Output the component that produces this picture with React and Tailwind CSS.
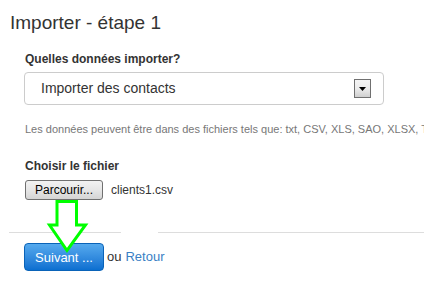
import React from "react";

const font = { fontFamily: '"Liberation Sans", Arial, sans-serif' };

const SelectArrow = () => (
  <div className="w-[17px] h-[19px] border border-[#707070] bg-gradient-to-b from-[#f4f4f4] via-[#ececec] to-[#cfcfcf] flex items-center justify-center">
    <svg width="7" height="4" viewBox="0 0 7 4">
      <polygon points="0,0 7,0 3.5,4" fill="#000" />
    </svg>
  </div>
);

const GreenArrow = () => (
  <svg
    className="absolute left-0 top-0 pointer-events-none"
    width="424"
    height="292"
    viewBox="0 0 424 292"
  >
    <polygon
      points="57,201.5 57,225 49.5,225 67,250.5 85.5,225 76.5,225 76.5,201.5"
      fill="#fff"
      stroke="#00ff00"
      strokeWidth="3"
      strokeLinejoin="miter"
    />
  </svg>
);

export default function App() {
  return (
    <div className="relative w-[424px] h-[292px] overflow-hidden bg-white text-[#333]" style={font}>
      <h1 className="mt-[11px] ml-[10px] text-[19px] leading-[24px] font-normal text-[#333]">
        Importer - étape 1
      </h1>

      <div className="ml-[24px]">
        <label className="block mt-[16px] ml-[1px] text-[12px] leading-[16px] font-bold text-[#333]">
          Quelles données importer?
        </label>

        <div className="mt-[5px] w-[360px] h-[33px] border border-[#cccccc] rounded-[4px] bg-white flex items-center justify-between pl-[16px] pr-[12px]">
          <span className="text-[14px] text-[#333]">Importer des contacts</span>
          <SelectArrow />
        </div>

        <p className="mt-[17px] ml-[1px] text-[11px] leading-[14px] text-[#777] whitespace-nowrap">
          Les données peuvent être dans des fichiers tels que: txt, CSV, XLS, SAO, XLSX, TAB
        </p>

        <label className="block mt-[22px] ml-[1px] text-[12px] leading-[16px] font-bold text-[#333]">
          Choisir le fichier
        </label>

        <div className="mt-[6px] ml-[1px] flex items-center gap-[8px]">
          <button className="w-[78px] h-[20px] border border-[#707070] rounded-[3px] bg-gradient-to-b from-[#f2f2f2] via-[#e6e6e6] to-[#d4d4d4] text-[12px] text-black leading-none">
            Parcourir...
          </button>
          <span className="text-[12px] text-[#333]">clients1.csv</span>
        </div>
      </div>

      <div className="mt-[32px] ml-[9px] flex">
        <div className="w-[112px] h-px bg-[#dddddd]" />
        <div className="w-[37px] h-px" />
        <div className="flex-1 h-px bg-[#dddddd]" />
      </div>

      <div className="mt-[10px] ml-[24px] flex items-center">
        <button className="w-[80px] h-[28px] rounded-[4px] border border-[#0a63b8] bg-gradient-to-b from-[#55aaee] to-[#0a6fd0] text-white text-[13px] leading-none">
          Suivant ...
        </button>
        <span className="ml-[3px] text-[13px] text-[#333]">ou</span>
        <a className="ml-[4px] text-[13px] text-[#3a7fc5]" href="#">
          Retour
        </a>
      </div>

      <GreenArrow />
    </div>
  );
}
